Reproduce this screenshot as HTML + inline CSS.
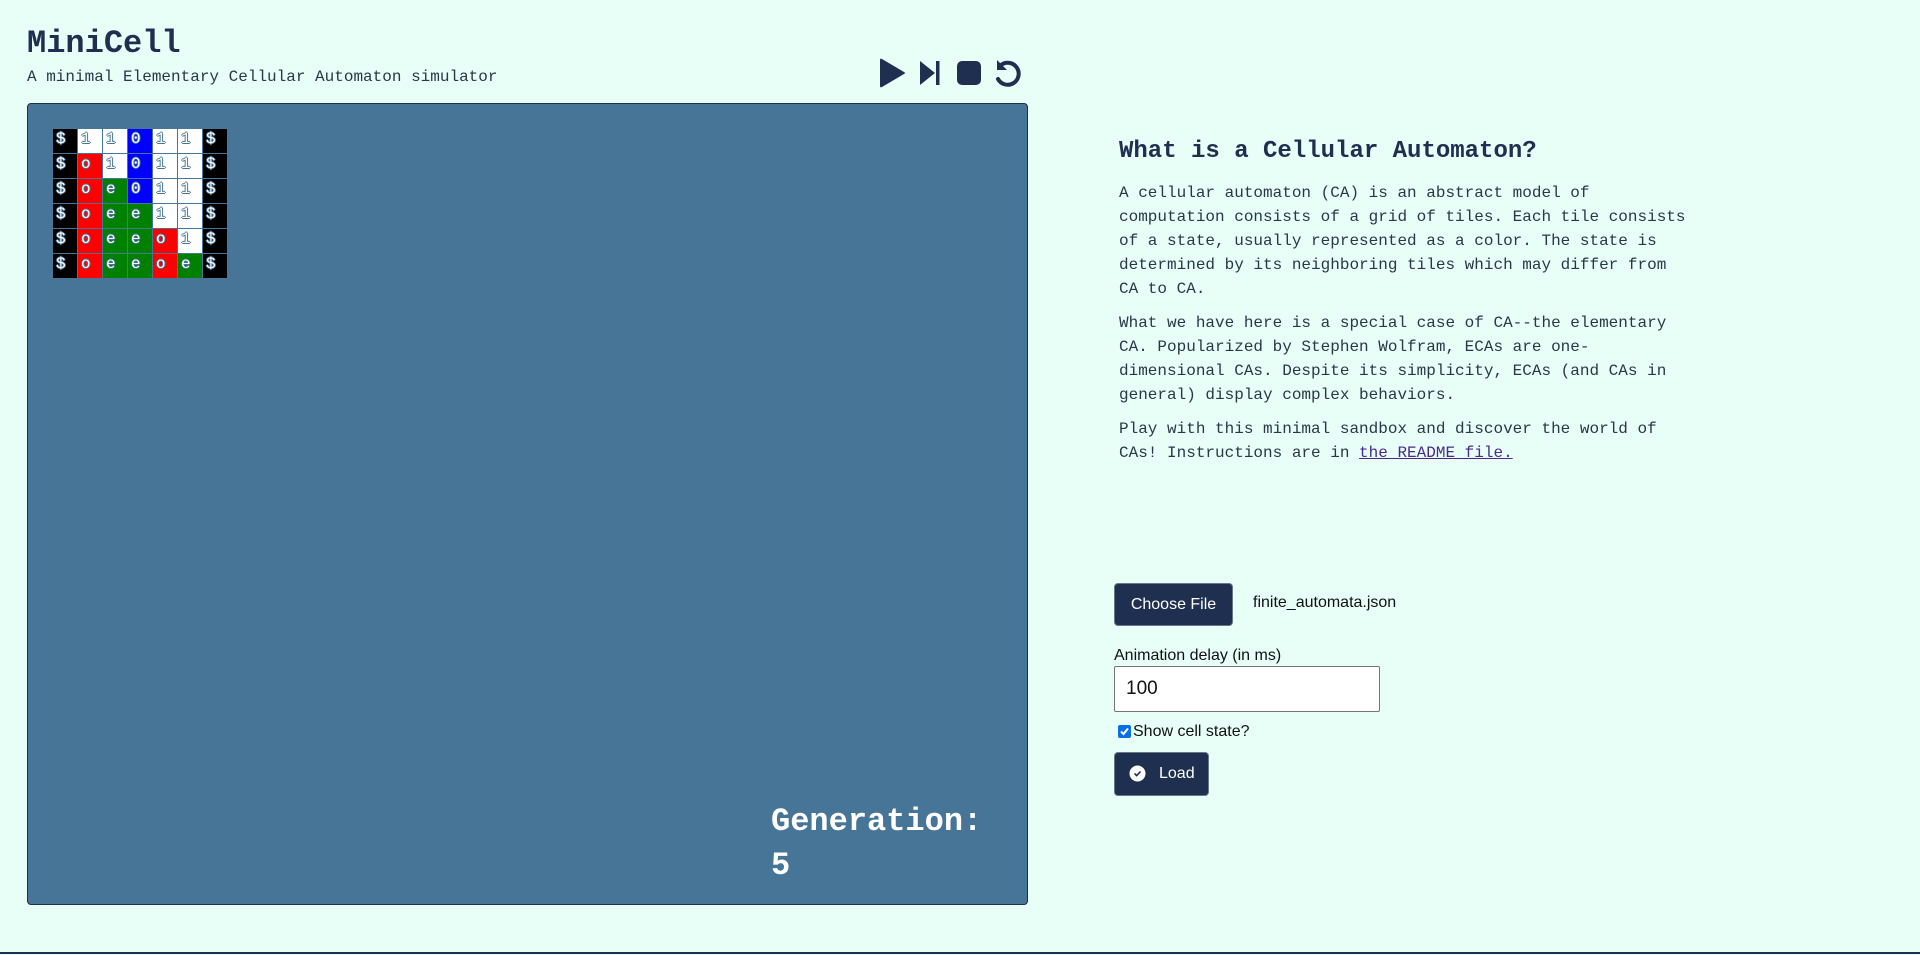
<!DOCTYPE html>
<html><head><meta charset="utf-8"><style>
html,body{margin:0;padding:0}
body{width:1920px;height:955px;background:#e8fff8;position:relative;overflow:hidden;font-family:"Liberation Mono",monospace;color:#1e2f4f}
.abs{position:absolute}
h1{position:absolute;left:27px;top:22px;margin:0;font-size:32px;font-weight:bold;line-height:44px;color:#1e2f4f}
.sub{left:27px;top:68px;font-size:16px;color:#2a3748}
.panel{left:27px;top:103px;width:999px;height:800px;background:#477598;border:1px solid #1e2f4f;border-radius:4px}
.grid{left:53px;top:129px}
.c{position:absolute;width:24px;height:24px;font:16px "Liberation Mono",monospace;color:#fff;line-height:20px;text-indent:3px;text-shadow:1px 0 #477598,-1px 0 #477598,0 1px #477598,0 -1px #477598}
.gen{left:771px;top:800px;font-size:32px;font-weight:bold;color:#fff;line-height:44px}
.info{left:1119px;top:132px;width:572px;color:#2a3748;font-size:16px;line-height:24px}
.info h2{margin:0 0 9px;font-size:24px;line-height:40px;color:#1e2f4f}
.info p{margin:0 0 10px}
.info a{color:#4b2a8a}
.btn{background:#1e2f4f;color:#fff;border:1px solid #6b7785;border-radius:4px;font:16px "Liberation Sans",sans-serif;box-sizing:border-box}
.sans{font-family:"Liberation Sans",sans-serif;font-size:16px;color:#111}
</style></head><body>
<h1>MiniCell</h1>
<div class="abs sub">A minimal Elementary Cellular Automaton simulator</div>
<svg class="abs" style="left:876px;top:57px" width="156" height="32" viewBox="0 0 156 32">
<path d="M4 3 Q4 1 6 2 L28 15 Q30 16 28 17 L6 30 Q4 31 4 29Z" fill="#1e2f4f"/>
<path d="M44 4 L59 16 L44 28Z" fill="#1e2f4f"/><rect x="60" y="4" width="3.5" height="24" fill="#1e2f4f"/>
<rect x="81" y="4" width="24" height="24" rx="5" fill="#1e2f4f"/>
<path d="M125 8 A11 11 0 1 1 122 22" fill="none" stroke="#1e2f4f" stroke-width="4" stroke-linecap="round"/>
<path d="M121 3 L121 13 L131 13Z" fill="#1e2f4f"/>
</svg>
<div class="abs panel"></div>
<div class="abs grid" id="g"></div>
<div class="abs gen">Generation:<br>5</div>
<div class="abs info">
<h2>What is a Cellular Automaton?</h2>
<p>A cellular automaton (CA) is an abstract model of computation consists of a grid of tiles. Each tile consists of a state, usually represented as a color. The state is determined by its neighboring tiles which may differ from CA to CA.</p>
<p>What we have here is a special case of CA--the elementary CA. Popularized by Stephen Wolfram, ECAs are one-dimensional CAs. Despite its simplicity, ECAs (and CAs in general) display complex behaviors.</p>
<p>Play with this minimal sandbox and discover the world of CAs! Instructions are in <a href="#">the README file.</a></p>
</div>
<div class="abs btn" style="left:1114px;top:583px;width:119px;height:43px;line-height:41px;text-align:center">Choose File</div>
<div class="abs sans" style="left:1253px;top:594px">finite_automata.json</div>
<div class="abs sans" style="left:1114px;top:647px">Animation delay (in ms)</div>
<div class="abs" style="left:1114px;top:666px;width:266px;height:46px;background:#fff;border:1px solid #767676;box-sizing:border-box;border-radius:2px;font:19px 'Liberation Sans',sans-serif;line-height:44px;padding-left:11px;color:#111">100</div>
<div class="abs" style="left:1118px;top:725px;width:13px;height:13px;background:#0a6ee6;border-radius:2px"><svg width="13" height="13"><path d="M3 6.5 L5.5 9 L10 3.5" stroke="#fff" stroke-width="2" fill="none"/></svg></div>
<div class="abs sans" style="left:1133px;top:723px">Show cell state?</div>
<div class="abs btn" style="left:1114px;top:752px;width:95px;height:44px;line-height:42px;padding-left:44px">Load</div>
<svg class="abs" style="left:1129px;top:765px" width="17" height="17"><circle cx="8.5" cy="8.5" r="8" fill="#fff"/><path d="M5.5 8.5 L7.7 10.6 L11.5 6.5" stroke="#1e2f4f" stroke-width="1.6" fill="none"/></svg>
<div class="abs" style="left:0;top:952px;width:1920px;height:2px;background:#1e2f4f"></div>
<script>
var rows=["$11011$","$o1011$","$oe011$","$oee11$","$oeeo1$","$oeeoe$"];
var col={'$':'#000','1':'#fff','0':'#00f','o':'#f00','e':'#008000'};
var g=document.getElementById('g'),h='';
for(var r=0;r<6;r++){var chars=rows[r].split('');
 for(var c=0;c<7;c++){var ch=chars[c];
  h+='<div class="c" style="left:'+(c*25)+'px;top:'+(r*25)+'px;background:'+col[ch]+'">'+ch+'</div>';}}
g.innerHTML=h;
</script>
</body></html>
